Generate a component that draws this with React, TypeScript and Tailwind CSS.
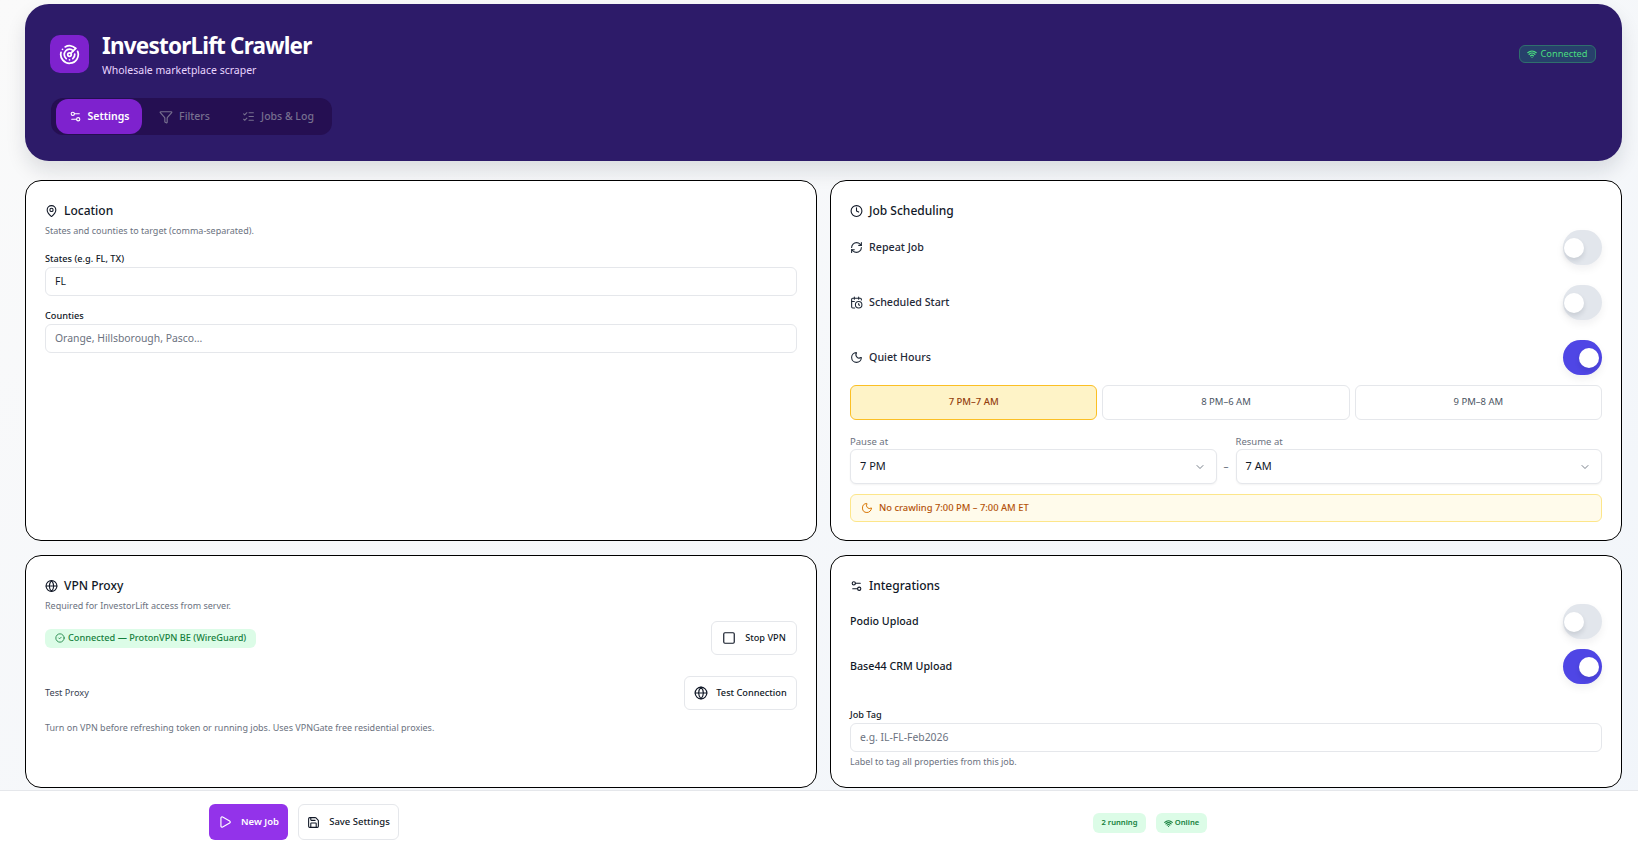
import {
  CalendarClock,
  ChevronDown,
  CircleCheck,
  Clock,
  Filter,
  Globe,
  ListChecks,
  MapPin,
  Moon,
  Play,
  Radar,
  RefreshCw,
  Save,
  Settings2,
  Square,
  Wifi,
} from "lucide-react";
import type { ReactNode } from "react";

function Toggle({ on }: { on?: boolean }) {
  return (
    <div
      className={`flex h-[35px] w-[39px] shrink-0 items-center rounded-full shadow-[0_4px_8px_rgba(15,23,42,0.06)] ${
        on ? "justify-end bg-[#4f46e5] pr-[3px]" : "justify-start bg-[#e2e6ec] pl-[1px]"
      }`}
    >
      <div className="h-[20px] w-[20px] rounded-full bg-white shadow-[0_3px_5px_rgba(15,23,42,0.12)]" />
    </div>
  );
}

function Card({ children }: { children: ReactNode }) {
  return (
    <section className="rounded-2xl border border-black bg-white px-[19px] pt-[20px]">
      {children}
    </section>
  );
}

function CardTitle({ icon, title }: { icon: ReactNode; title: string }) {
  return (
    <div className="flex h-5 items-center gap-[6px] text-[12px] font-medium text-[#111827]">
      <span className="flex w-[13px] justify-center">{icon}</span>
      {title}
    </div>
  );
}

function ScheduleRow({ icon, label, on }: { icon: ReactNode; label: string; on?: boolean }) {
  return (
    <div className="flex h-[35px] items-center justify-between">
      <div className="flex items-center gap-[6px] text-[10.7px] font-medium text-[#1f2937]">
        <span className="flex w-[13px] justify-center">{icon}</span>
        {label}
      </div>
      <Toggle on={on} />
    </div>
  );
}

function TextInput({ value, placeholder }: { value?: string; placeholder?: string }) {
  return (
    <div
      className={`flex h-[29px] items-center rounded-md border border-[#e5e7eb] bg-white px-[9px] text-[10.4px] ${
        value ? "text-[#111827]" : "text-[#6b7280]"
      }`}
    >
      {value ?? placeholder}
    </div>
  );
}

function TimeSelect({ label, value }: { label: string; value: string }) {
  return (
    <div className="flex-1">
      <div className="flex h-[14px] items-center text-[9.5px] text-[#6b7280]">{label}</div>
      <div className="flex h-[35px] items-center justify-between rounded-md border border-[#e5e7eb] bg-white pl-[9px] pr-[10px] text-[11px] text-[#111827] shadow-[0_1px_2px_rgba(0,0,0,0.05)]">
        {value}
        <ChevronDown size={12} strokeWidth={1.5} className="text-[#4b5563]" />
      </div>
    </div>
  );
}

export default function App() {
  return (
    <div
      className="flex h-screen flex-col overflow-hidden bg-linear-to-br from-[#fafafa] to-[#f1f5fa] text-[#111827]"
      style={{ fontFamily: '"Noto Sans", sans-serif' }}
    >
      <div className="flex-1 pl-[25px] pr-[16px] pt-[4px]">
        {/* Header */}
        <header className="flex h-[157px] justify-between rounded-3xl bg-[#2d1b69] pl-[25px] pr-[26px] pt-[31px] shadow-[0_10px_20px_rgba(15,23,42,0.12)]">
          <div>
            <div className="flex items-start gap-[13px]">
              <div className="flex h-[38px] w-[39px] items-center justify-center rounded-[10px] bg-[#7e22ce]">
                <Radar size={21} className="text-white" />
              </div>
              <div className="-mt-[2px]">
                <div className="text-[22.5px] font-bold leading-[26px] tracking-[-0.8px] text-white">InvestorLift Crawler</div>
                <div className="mt-[4px] text-[10.5px] leading-[14px] text-[#e9d5ff]">Wholesale marketplace scraper</div>
              </div>
            </div>
            <div className="ml-[1px] mt-[21px] flex h-[37px] w-[281px] items-center rounded-xl bg-[#250f52] pl-[5px] text-[10.5px] font-medium text-[#77708f]">
              <div className="flex h-[35px] w-[86px] items-center justify-center gap-[6px] rounded-xl bg-[#7e22ce] font-semibold text-white">
                <Settings2 size={13} />
                Settings
              </div>
              <div className="flex w-[85px] items-center justify-center gap-[6px]">
                <Filter size={14} />
                Filters
              </div>
              <div className="flex w-[102px] items-center justify-center gap-[6px]">
                <ListChecks size={13} />
                Jobs &amp; Log
              </div>
            </div>
          </div>
          <div className="mt-[10px] flex h-[18px] w-[77px] items-center justify-center gap-[3px] rounded-md border border-[#2f6f6d] bg-[#27406b] text-[9.3px] text-[#4ade80]">
            <Wifi size={10} strokeWidth={3} />
            Connected
          </div>
        </header>

        <main className="mt-[19px] grid grid-cols-2 gap-x-[13px] gap-y-[14px]">
          {/* Location */}
          <Card>
            <CardTitle icon={<MapPin size={14} />} title="Location" />
            <p className="text-[9px] leading-[19px] text-[#6b7280]">States and counties to target (comma-separated).</p>
            <label className="mt-[11px] block text-[9.2px] font-medium leading-[16px]">States (e.g. FL, TX)</label>
            <TextInput value="FL" />
            <label className="mt-[12px] block text-[9.2px] font-medium leading-[16px]">Counties</label>
            <TextInput placeholder="Orange, Hillsborough, Pasco..." />
          </Card>

          {/* Job Scheduling */}
          <Card>
            <CardTitle icon={<Clock size={14} />} title="Job Scheduling" />
            <div className="mt-[9px] space-y-[20px]">
              <ScheduleRow icon={<RefreshCw size={13} />} label="Repeat Job" />
              <ScheduleRow icon={<CalendarClock size={13} />} label="Scheduled Start" />
              <ScheduleRow icon={<Moon size={13} />} label="Quiet Hours" on />
            </div>
            <div className="mt-[10px] grid grid-cols-3 gap-[5px] text-[9.5px] text-[#4b5563]">
              <div className="flex h-[35px] items-center justify-center rounded-md border border-[#fbbf24] bg-[#fef3c7] font-medium text-[#92400e]">
                7 PM–7 AM
              </div>
              <div className="flex h-[35px] items-center justify-center rounded-md border border-[#e5e7eb]">8 PM–6 AM</div>
              <div className="flex h-[35px] items-center justify-center rounded-md border border-[#e5e7eb]">9 PM–8 AM</div>
            </div>
            <div className="mt-[15px] flex items-end">
              <TimeSelect label="Pause at" value="7 PM" />
              <div className="flex h-[35px] w-[19px] items-center justify-center text-[10px] text-[#6b7280]">–</div>
              <TimeSelect label="Resume at" value="7 AM" />
            </div>
            <div className="mb-[18px] mt-[10px] flex h-[28px] items-center gap-[6px] rounded-md border border-[#fde68a] bg-[#fffbeb] px-[10px] text-[9.4px] font-medium text-[#b45309]">
              <Moon size={12} className="text-[#d97706]" />
              No crawling 7:00 PM – 7:00 AM ET
            </div>
          </Card>

          {/* VPN Proxy */}
          <Card>
            <CardTitle icon={<Globe size={14} />} title="VPN Proxy" />
            <p className="text-[9px] leading-[19px] text-[#6b7280]">Required for InvestorLift access from server.</p>
            <div className="mt-[6px] flex items-center justify-between">
              <div className="flex h-[19px] items-center gap-[3px] rounded-md bg-[#dcfce7] px-[10px] text-[9.2px] font-medium text-[#15803d]">
                <CircleCheck size={10} />
                Connected — ProtonVPN BE (WireGuard)
              </div>
              <div className="flex h-[34px] w-[86px] items-center justify-center gap-[9px] rounded-md border border-[#e5e7eb] bg-white text-[9.2px] font-medium">
                <Square size={14} />
                Stop VPN
              </div>
            </div>
            <div className="mt-[21px] flex items-center justify-between">
              <span className="text-[9.2px] text-[#374151]">Test Proxy</span>
              <div className="flex h-[34px] w-[113px] items-center justify-center gap-[8px] rounded-md border border-[#e5e7eb] bg-white text-[9.2px] font-medium">
                <Globe size={14} />
                Test Connection
              </div>
            </div>
            <p className="mt-[9px] text-[9px] leading-[18px] text-[#6b7280]">
              Turn on VPN before refreshing token or running jobs. Uses VPNGate free residential proxies.
            </p>
          </Card>

          {/* Integrations */}
          <Card>
            <CardTitle icon={<Settings2 size={14} />} title="Integrations" />
            <div className="mt-[8px] space-y-[10px] text-[10.7px] font-medium">
              <div className="flex h-[35px] items-center justify-between">
                Podio Upload
                <Toggle />
              </div>
              <div className="flex h-[35px] items-center justify-between">
                Base44 CRM Upload
                <Toggle on />
              </div>
            </div>
            <label className="mt-[23px] block text-[9.2px] font-medium leading-[16px]">Job Tag</label>
            <TextInput placeholder="e.g. IL-FL-Feb2026" />
            <p className="mb-[17px] mt-[2px] text-[9px] leading-[16px] text-[#6b7280]">Label to tag all properties from this job.</p>
          </Card>
        </main>
      </div>

      {/* Footer */}
      <footer className="flex h-[60px] shrink-0 items-start border-t border-[#e5e7eb] bg-white pl-[209px] pt-[13px] text-[9.5px] font-medium">
        <div className="flex h-[36px] w-[79px] items-center justify-center gap-[9px] rounded-md bg-[#9333ea] font-semibold text-white">
          <Play size={14} />
          New Job
        </div>
        <div className="ml-[10px] flex h-[36px] w-[101px] items-center justify-center gap-[9px] rounded-md border border-[#e5e7eb]">
          <Save size={13} />
          Save Settings
        </div>
        <div className="ml-[694px] mt-[9px] flex h-[20px] w-[53px] items-center justify-center rounded-md bg-[#dcfce7] text-[7.6px] font-semibold text-[#15803d]">
          2 running
        </div>
        <div className="ml-[10px] mt-[9px] flex h-[20px] w-[51px] items-center justify-center gap-[2px] rounded-md bg-[#dcfce7] text-[7.6px] font-semibold text-[#15803d]">
          <Wifi size={9} strokeWidth={3} />
          Online
        </div>
      </footer>
    </div>
  );
}
